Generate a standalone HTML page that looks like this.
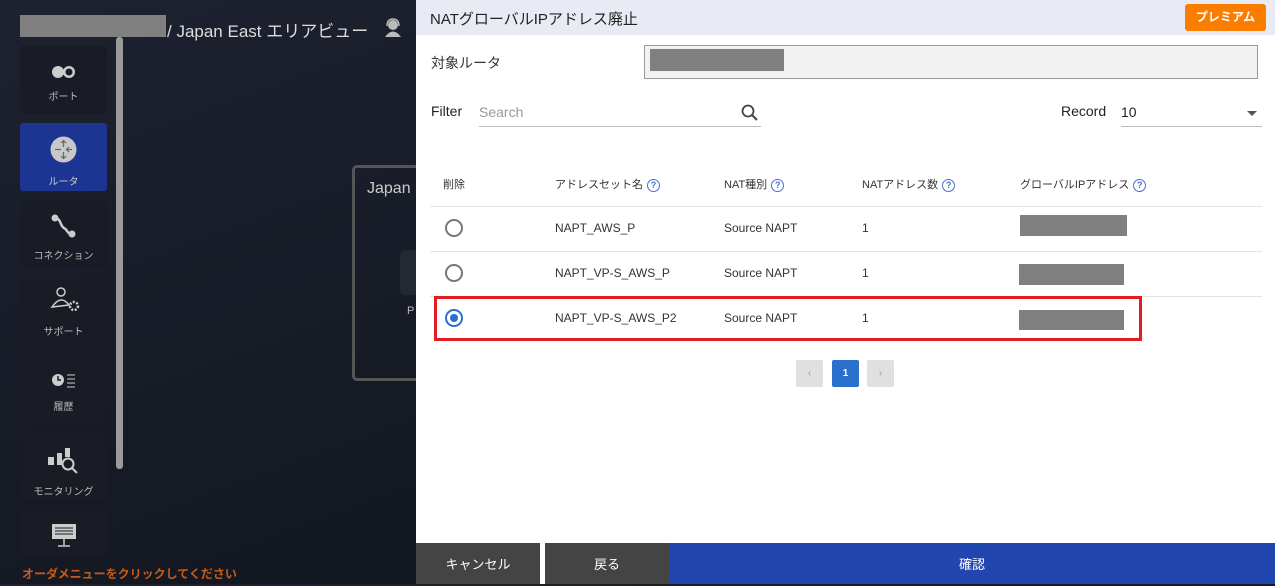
<!DOCTYPE html>
<html><head><meta charset="utf-8"><style>
*{margin:0;padding:0;box-sizing:border-box}
body{width:1275px;height:584px;overflow:hidden;position:relative;font-family:"Liberation Sans","Noto Sans CJK JP",sans-serif;background:linear-gradient(160deg,#1e2230,#121720 70%,#11151d);}
.abs{position:absolute}
.side{position:absolute;left:20px;width:87px;background:#191c25;border-radius:3px;color:#bbb;font-size:10px;text-align:center}
.side .lbl{position:absolute;left:0;right:0}
.panel{position:absolute;left:416px;top:0;width:859px;height:584px;background:#fff}
.t{position:absolute;font-size:12px;color:#333;white-space:nowrap}
.q{display:inline-block;width:13px;height:13px;border:1.5px solid #4a6fd0;border-radius:50%;color:#4a6fd0;font-size:9px;line-height:10px;text-align:center;vertical-align:middle;margin-left:4px;font-weight:bold}
.line{position:absolute;left:430px;width:832px;height:1px;background:#e2e2e2}
.radio{position:absolute;width:18px;height:18px;border:2px solid #777;border-radius:50%}
.gray{position:absolute;background:#808080}
</style></head><body>
<div class="gray" style="left:20px;top:15px;width:146px;height:22px"></div>
<div class="abs" style="left:167px;top:17px;color:#ddd;font-size:17px">/ Japan East エリアビュー</div>
<svg class="abs" style="left:383px;top:18px" width="20" height="20" viewBox="0 0 20 20"><circle cx="10" cy="7" r="5" fill="#bbb"/><path d="M2 19 Q10 8 18 19Z" fill="#bbb"/><path d="M4 8 Q4 1 10 1 Q16 1 16 8" stroke="#bbb" fill="none" stroke-width="1.5"/></svg>
<div class="abs" style="left:116px;top:37px;width:7px;height:432px;background:#9a9a9a;border-radius:3px"></div>
<div class="side" style="top:46px;height:68px"><svg class="abs" style="left:31px;top:19px" width="26" height="14"><circle cx="7" cy="7" r="6" fill="#ccc"/><circle cx="18" cy="7" r="6" fill="#ccc"/><circle cx="18" cy="7" r="3.5" fill="#191c25"/></svg><div class="lbl" style="top:42px">ポート</div></div>
<div class="side" style="top:123px;height:68px;background:#1c3593;color:#ccc"><svg class="abs" style="left:30px;top:13px" width="27" height="27"><circle cx="13.5" cy="13.5" r="13" fill="#c8c8c8"/><path d="M13.5 5v6M11 7l2.5-2.5L16 7M13.5 22v-6M11 20l2.5 2.5L16 20M5 13.5h6M19 11l-2.5 2.5L19 16M22 13.5h-5" stroke="#666" fill="none" stroke-width="1.2"/></svg><div class="lbl" style="top:50px">ルータ</div></div>
<div class="side" style="top:200px;height:68px"><svg class="abs" style="left:31px;top:14px" width="26" height="24"><path d="M4 4 C10 4 9 12 13 14 C17 16 16 20 21 20" stroke="#ccc" stroke-width="2.5" fill="none"/><circle cx="4" cy="4" r="3.5" fill="#ccc"/><circle cx="21" cy="20" r="3.5" fill="#ccc"/></svg><div class="lbl" style="top:47px">コネクション</div></div>
<div class="side" style="top:278px;height:68px"><svg class="abs" style="left:30px;top:8px" width="30" height="28"><circle cx="11" cy="6" r="4" stroke="#ccc" fill="none" stroke-width="1.5"/><path d="M2 21 Q11 8 19 19 L2 21Z" stroke="#ccc" fill="none" stroke-width="1.5"/><circle cx="24" cy="20" r="4" stroke="#ccc" fill="none" stroke-width="2.5" stroke-dasharray="2 1.5"/></svg><div class="lbl" style="top:45px">サポート</div></div>
<div class="side" style="top:355px;height:68px"><svg class="abs" style="left:32px;top:18px" width="26" height="16"><circle cx="6" cy="7" r="6" fill="#ccc"/><path d="M6 3v4h3" stroke="#191c25" stroke-width="1.5" fill="none"/><path d="M15 2h8M15 6h8M15 10h8M15 14h8" stroke="#ccc" stroke-width="1"/></svg><div class="lbl" style="top:43px">履歴</div></div>
<div class="side" style="top:432px;height:68px"><svg class="abs" style="left:27px;top:13px" width="34" height="30"><rect x="1" y="12" width="6" height="8" fill="#ccc"/><rect x="10" y="8" width="5" height="12" fill="#ccc"/><rect x="18" y="3" width="5" height="9" fill="#ccc"/><circle cx="21" cy="19" r="5.5" stroke="#ccc" fill="none" stroke-width="2"/><path d="M25 23l5 5" stroke="#ccc" stroke-width="2"/></svg><div class="lbl" style="top:51px">モニタリング</div></div>
<div class="side" style="top:510px;height:46px"><svg class="abs" style="left:32px;top:14px" width="24" height="24"><rect x="0" y="0" width="24" height="15" fill="#ccc"/><path d="M3 4h18M3 7h18M3 10h18" stroke="#191c25"/><path d="M12 15v6M6 22h12" stroke="#ccc" stroke-width="1.5"/></svg></div>
<div class="abs" style="left:22px;top:565px;color:#c85a1a;font-size:12px;font-weight:bold">オーダメニューをクリックしてください</div>
<div class="abs" style="left:352px;top:165px;width:80px;height:216px;border:3px solid #555;border-radius:5px"></div>
<div class="abs" style="left:367px;top:180px;color:#ccc;font-size:16px">Japan</div>
<div class="abs" style="left:400px;top:250px;width:30px;height:45px;background:#242833;border-radius:6px"></div>
<div class="abs" style="left:407px;top:305px;color:#bbb;font-size:11px">P</div>

<div class="panel"></div>
<div class="abs" style="left:416px;top:0;width:859px;height:35px;background:#e8eaf4"></div>
<div class="abs" style="left:430px;top:8px;font-size:15px;color:#222">NATグローバルIPアドレス廃止</div>
<div class="abs" style="left:1185px;top:4px;width:81px;height:27px;background:#fa7d00;border-radius:3px;color:#fff;font-size:12px;font-weight:bold;text-align:center;line-height:27px">プレミアム</div>
<div class="abs" style="left:431px;top:53px;font-size:14px;color:#333">対象ルータ</div>
<div class="abs" style="left:644px;top:45px;width:614px;height:34px;background:#f2f2f2;border:1px solid #999"></div>
<div class="gray" style="left:650px;top:49px;width:134px;height:22px"></div>
<div class="abs" style="left:431px;top:103px;font-size:14px;color:#222">Filter</div>
<div class="abs" style="left:479px;top:104px;font-size:14px;color:#999">Search</div>
<svg class="abs" style="left:741px;top:104px" width="18" height="18"><circle cx="7" cy="7" r="5.5" stroke="#444" stroke-width="1.8" fill="none"/><path d="M11 11l5 5" stroke="#444" stroke-width="2"/></svg>
<div class="abs" style="left:479px;top:126px;width:282px;height:1px;background:#bbb"></div>
<div class="abs" style="left:1061px;top:103px;font-size:14px;color:#222">Record</div>
<div class="abs" style="left:1121px;top:104px;font-size:14px;color:#222">10</div>
<div class="abs" style="left:1247px;top:111px;border:5px solid transparent;border-top:5px solid #555;border-bottom:0"></div>
<div class="abs" style="left:1121px;top:126px;width:141px;height:1px;background:#bbb"></div>

<div class="t" style="left:443px;top:176px;font-size:11px">削除</div>
<div class="t" style="left:555px;top:176px;font-size:11px">アドレスセット名<span class="q">?</span></div>
<div class="t" style="left:724px;top:176px;font-size:11px">NAT種別<span class="q">?</span></div>
<div class="t" style="left:862px;top:176px;font-size:11px">NATアドレス数<span class="q">?</span></div>
<div class="t" style="left:1020px;top:176px;font-size:11px">グローバルIPアドレス<span class="q">?</span></div>
<div class="line" style="top:206px"></div>
<div class="line" style="top:251px"></div>
<div class="line" style="top:296px"></div>
<div class="radio" style="left:445px;top:219px"></div>
<div class="radio" style="left:445px;top:264px"></div>
<div class="radio" style="left:445px;top:309px;border-color:#2a6fd0"><div style="margin:3px;width:8px;height:8px;border-radius:50%;background:#2a6fd0"></div></div>
<div class="t" style="left:555px;top:221px">NAPT_AWS_P</div>
<div class="t" style="left:555px;top:266px">NAPT_VP-S_AWS_P</div>
<div class="t" style="left:555px;top:311px">NAPT_VP-S_AWS_P2</div>
<div class="t" style="left:724px;top:221px">Source NAPT</div>
<div class="t" style="left:724px;top:266px">Source NAPT</div>
<div class="t" style="left:724px;top:311px">Source NAPT</div>
<div class="t" style="left:862px;top:221px">1</div>
<div class="t" style="left:862px;top:266px">1</div>
<div class="t" style="left:862px;top:311px">1</div>
<div class="gray" style="left:1020px;top:215px;width:107px;height:21px"></div>
<div class="gray" style="left:1019px;top:264px;width:105px;height:21px"></div>
<div class="gray" style="left:1019px;top:310px;width:105px;height:20px"></div>
<div class="abs" style="left:434px;top:296px;width:708px;height:45px;border:3px solid #e31c23"></div>
<div class="abs" style="left:796px;top:360px;width:27px;height:27px;background:#e0e0e0;border-radius:2px;color:#999;font-size:10px;text-align:center;line-height:27px">‹</div>
<div class="abs" style="left:832px;top:360px;width:27px;height:27px;background:#2b6fcc;border-radius:2px;color:#fff;font-size:10px;font-weight:bold;text-align:center;line-height:27px">1</div>
<div class="abs" style="left:867px;top:360px;width:27px;height:27px;background:#e0e0e0;border-radius:2px;color:#999;font-size:10px;text-align:center;line-height:27px">›</div>

<div class="abs" style="left:416px;top:543px;width:124px;height:41px;background:#444;color:#fff;font-size:13px;text-align:center;line-height:43px">キャンセル</div>
<div class="abs" style="left:545px;top:543px;width:124px;height:41px;background:#444;color:#fff;font-size:13px;text-align:center;line-height:43px">戻る</div>
<div class="abs" style="left:669px;top:543px;width:606px;height:41px;background:#2146b0;color:#fff;font-size:13px;text-align:center;line-height:43px">確認</div>
</body></html>
